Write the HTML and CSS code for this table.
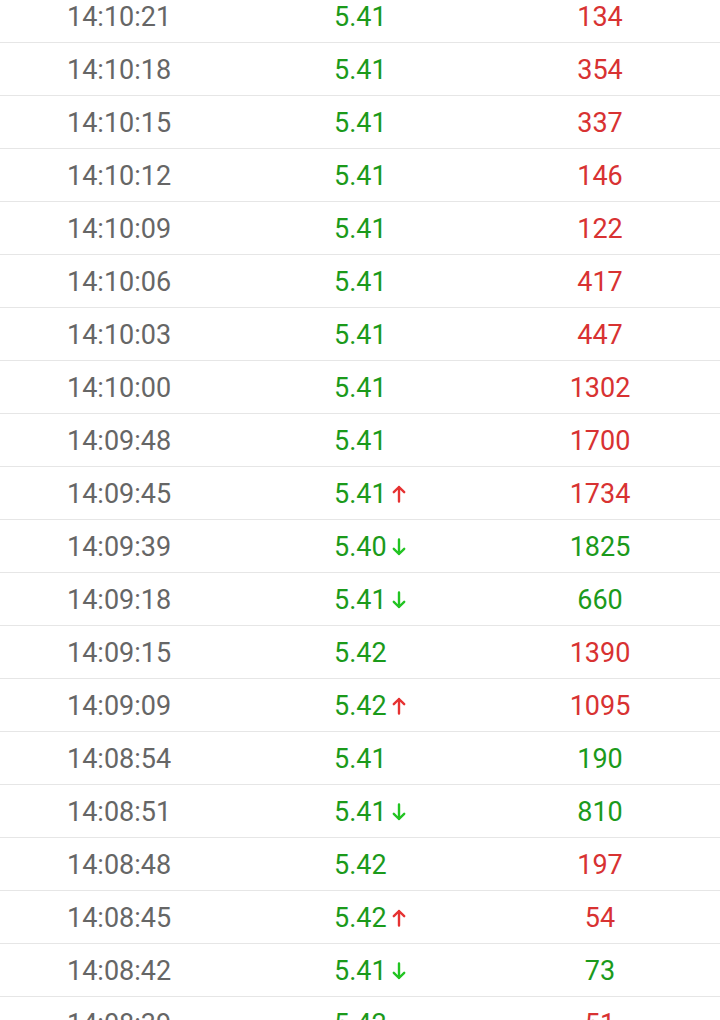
FILE: index.html
```html
<!DOCTYPE html>
<html>
<head>
<meta charset="utf-8">
<link rel="stylesheet" href="styles.css">
</head>
<body>
<div class="list">
  <div class="row"><span class="time">14:10:21</span><span class="price">5.41</span><span class="vol red">134</span></div>
  <div class="row"><span class="time">14:10:18</span><span class="price">5.41</span><span class="vol red">354</span></div>
  <div class="row"><span class="time">14:10:15</span><span class="price">5.41</span><span class="vol red">337</span></div>
  <div class="row"><span class="time">14:10:12</span><span class="price">5.41</span><span class="vol red">146</span></div>
  <div class="row"><span class="time">14:10:09</span><span class="price">5.41</span><span class="vol red">122</span></div>
  <div class="row"><span class="time">14:10:06</span><span class="price">5.41</span><span class="vol red">417</span></div>
  <div class="row"><span class="time">14:10:03</span><span class="price">5.41</span><span class="vol red">447</span></div>
  <div class="row"><span class="time">14:10:00</span><span class="price">5.41</span><span class="vol red">1302</span></div>
  <div class="row"><span class="time">14:09:48</span><span class="price">5.41</span><span class="vol red">1700</span></div>
  <div class="row"><span class="time">14:09:45</span><span class="price">5.41<svg class="arrow up" viewBox="0 0 14 18"><path d="M7 16.5V2M1.8 7.2L7 2l5.2 5.2"/></svg></span><span class="vol red">1734</span></div>
  <div class="row"><span class="time">14:09:39</span><span class="price">5.40<svg class="arrow down" viewBox="0 0 14 18"><path d="M7 1.5V16M1.8 10.8L7 16l5.2-5.2"/></svg></span><span class="vol green">1825</span></div>
  <div class="row"><span class="time">14:09:18</span><span class="price">5.41<svg class="arrow down" viewBox="0 0 14 18"><path d="M7 1.5V16M1.8 10.8L7 16l5.2-5.2"/></svg></span><span class="vol green">660</span></div>
  <div class="row"><span class="time">14:09:15</span><span class="price">5.42</span><span class="vol red">1390</span></div>
  <div class="row"><span class="time">14:09:09</span><span class="price">5.42<svg class="arrow up" viewBox="0 0 14 18"><path d="M7 16.5V2M1.8 7.2L7 2l5.2 5.2"/></svg></span><span class="vol red">1095</span></div>
  <div class="row"><span class="time">14:08:54</span><span class="price">5.41</span><span class="vol green">190</span></div>
  <div class="row"><span class="time">14:08:51</span><span class="price">5.41<svg class="arrow down" viewBox="0 0 14 18"><path d="M7 1.5V16M1.8 10.8L7 16l5.2-5.2"/></svg></span><span class="vol green">810</span></div>
  <div class="row"><span class="time">14:08:48</span><span class="price">5.42</span><span class="vol red">197</span></div>
  <div class="row"><span class="time">14:08:45</span><span class="price">5.42<svg class="arrow up" viewBox="0 0 14 18"><path d="M7 16.5V2M1.8 7.2L7 2l5.2 5.2"/></svg></span><span class="vol red">54</span></div>
  <div class="row"><span class="time">14:08:42</span><span class="price">5.41<svg class="arrow down" viewBox="0 0 14 18"><path d="M7 1.5V16M1.8 10.8L7 16l5.2-5.2"/></svg></span><span class="vol green">73</span></div>
  <div class="row"><span class="time">14:08:39</span><span class="price">5.42</span><span class="vol red">51</span></div>
</div>
</body>
</html>
```
FILE: styles.css
```css
html, body {
  margin: 0;
  padding: 0;
  background: #ffffff;
  overflow: hidden;
}
body {
  width: 720px;
  height: 1020px;
  font-family: Roboto, "Liberation Sans", sans-serif;
}
.list {
  margin-top: -10px;
}
.row {
  display: grid;
  grid-template-columns: 267px 200px 132px;
  padding-left: 67px;
  padding-top: 3px;
  height: 49px;
  align-items: center;
  border-bottom: 1px solid #e6e6e6;
  font-size: 27px;
  line-height: 1;
}
.time {
  color: #666666;
}
.price {
  color: #1b9a1b;
  display: flex;
  align-items: center;
}
.vol {
  text-align: center;
}
.red {
  color: #d83232;
}
.green {
  color: #1b9a1b;
}
.arrow {
  width: 14px;
  height: 18px;
  margin-left: 5px;
  margin-top: -2px;
  fill: none;
  stroke-width: 2.4;
  stroke-linecap: round;
  stroke-linejoin: round;
}
.arrow.up {
  stroke: #e63232;
}
.arrow.down {
  stroke: #22c422;
}
```
